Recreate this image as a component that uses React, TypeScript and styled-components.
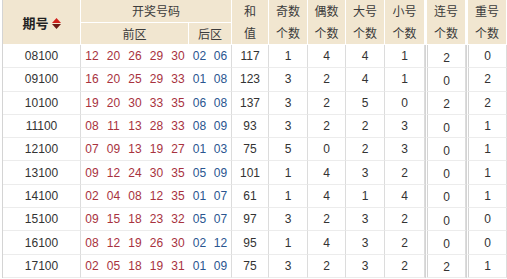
import React from "react";
import styled, { createGlobalStyle } from "styled-components";

const Global = createGlobalStyle`
  html, body { margin: 0; padding: 0; background: #ffffff; }
  body { font-family: "Liberation Sans", "Noto Sans CJK SC", sans-serif; }
`;

const Wrap = styled.div`
  padding-left: 2px;
`;

const Table = styled.table`
  border-collapse: separate;
  border-spacing: 0;
  table-layout: fixed;
  width: 505px;
  border-left: 1px solid #d4d4d4;
  font-size: 12px;
  color: #333;
`;

const HeadCell = styled.th<{ $bold?: boolean; $dbl?: boolean }>`
  background: #f1e6d0;
  font-weight: ${(p) => (p.$bold ? 700 : 400)};
  font-size: ${(p) => (p.$bold ? "13px" : "12px")};
  color: ${(p) => (p.$bold ? "#222" : "#3c3c3c")};
  font-family: "Noto Sans CJK SC", "Liberation Sans", sans-serif;
  border-right: 1px solid #fff;
  border-bottom: 1px solid #fff;
  ${(p) => (p.$dbl ? "border-left: 2px solid #fff;" : "")}
  padding: 0;
  height: 21px;
  line-height: 21px;
  text-align: center;
  vertical-align: middle;
`;

const TwoLine = styled.span`
  display: block;
  line-height: 22px;
`;

const SortIcon = styled.svg`
  display: inline-block;
  vertical-align: -1px;
  margin-left: 3px;
`;

const Row = styled.tr`
  height: 23.3px;
`;

const Cell = styled.td<{ $dbl?: boolean; $low?: boolean }>`
  border-right: 1px solid #dcdcdc;
  border-bottom: 1px solid #ececec;
  ${(p) => (p.$dbl ? "border-left: 3px double #d4d4d4;" : "")}
  padding: ${(p) => (p.$low ? "3px 0 0" : "0")};
  text-align: center;
  vertical-align: middle;
  color: #333;
  white-space: nowrap;
`;

const NumCell = styled.td<{ $back?: boolean; $end?: boolean }>`
  border-bottom: 1px solid #ececec;
  border-right: ${(p) => (p.$end ? "1px solid #dcdcdc" : "0")};
  padding: 0;
  text-align: center;
  vertical-align: middle;
  color: ${(p) => (p.$back ? "#2a5590" : "#a8323e")};
`;

type Rec = [string, number[], number[], number, number, number, number, number, number, number];

const data: Rec[] = [
  ["08100", [12, 20, 26, 29, 30], [2, 6], 117, 1, 4, 4, 1, 2, 0],
  ["09100", [16, 20, 25, 29, 33], [1, 8], 123, 3, 2, 4, 1, 0, 2],
  ["10100", [19, 20, 30, 33, 35], [6, 8], 137, 3, 2, 5, 0, 2, 2],
  ["11100", [8, 11, 13, 28, 33], [8, 9], 93, 3, 2, 2, 3, 0, 1],
  ["12100", [7, 9, 13, 19, 27], [1, 3], 75, 5, 0, 2, 3, 0, 1],
  ["13100", [9, 12, 24, 30, 35], [5, 9], 101, 1, 4, 3, 2, 0, 1],
  ["14100", [2, 4, 8, 12, 35], [1, 7], 61, 1, 4, 1, 4, 0, 1],
  ["15100", [9, 15, 18, 23, 32], [5, 7], 97, 3, 2, 3, 2, 0, 0],
  ["16100", [8, 12, 19, 26, 30], [2, 12], 95, 1, 4, 3, 2, 0, 0],
  ["17100", [2, 5, 18, 19, 31], [1, 9], 75, 3, 2, 3, 2, 2, 1],
];

const pad = (n: number) => (n < 10 ? "0" + n : String(n));

const numWidths = [22, 21, 22, 21, 22, 21, 22];

export default function App() {
  return (
    <Wrap>
      <Global />
      <Table>
        <colgroup>
          <col style={{ width: 78 }} />
          {numWidths.map((w, i) => (
            <col key={i} style={{ width: w }} />
          ))}
          <col style={{ width: 37 }} />
          <col style={{ width: 39 }} />
          <col style={{ width: 38 }} />
          <col style={{ width: 39 }} />
          <col style={{ width: 40 }} />
          <col style={{ width: 41 }} />
          <col style={{ width: 41 }} />
        </colgroup>
        <thead>
          <tr>
            <HeadCell rowSpan={2} $bold>
              期号
              <SortIcon width="9" height="11" viewBox="0 0 9 11">
                <polygon points="4.5,0 9,5 0,5" fill="#d0211c" />
                <polygon points="0,6 9,6 4.5,11" fill="#6b1a14" />
              </SortIcon>
            </HeadCell>
            <HeadCell colSpan={7}>开奖号码</HeadCell>
            <HeadCell rowSpan={2}>
              <TwoLine>和</TwoLine>
              <TwoLine>值</TwoLine>
            </HeadCell>
            {["奇数", "偶数", "大号", "小号", "连号", "重号"].map((t, i) => (
              <HeadCell key={t} rowSpan={2} $dbl={i >= 4}>
                <TwoLine>{t}</TwoLine>
                <TwoLine>个数</TwoLine>
              </HeadCell>
            ))}
          </tr>
          <tr>
            <HeadCell colSpan={5}>前区</HeadCell>
            <HeadCell colSpan={2}>后区</HeadCell>
          </tr>
        </thead>
        <tbody>
          {data.map((r) => (
            <Row key={r[0]}>
              <Cell>{r[0]}</Cell>
              {r[1].map((n, i) => (
                <NumCell key={"f" + i}>{pad(n)}</NumCell>
              ))}
              {r[2].map((n, i) => (
                <NumCell key={"b" + i} $back $end={i === 1}>
                  {pad(n)}
                </NumCell>
              ))}
              <Cell>{r[3]}</Cell>
              <Cell>{r[4]}</Cell>
              <Cell>{r[5]}</Cell>
              <Cell>{r[6]}</Cell>
              <Cell>{r[7]}</Cell>
              <Cell $dbl $low>{r[8]}</Cell>
              <Cell $dbl>{r[9]}</Cell>
            </Row>
          ))}
        </tbody>
      </Table>
    </Wrap>
  );
}
